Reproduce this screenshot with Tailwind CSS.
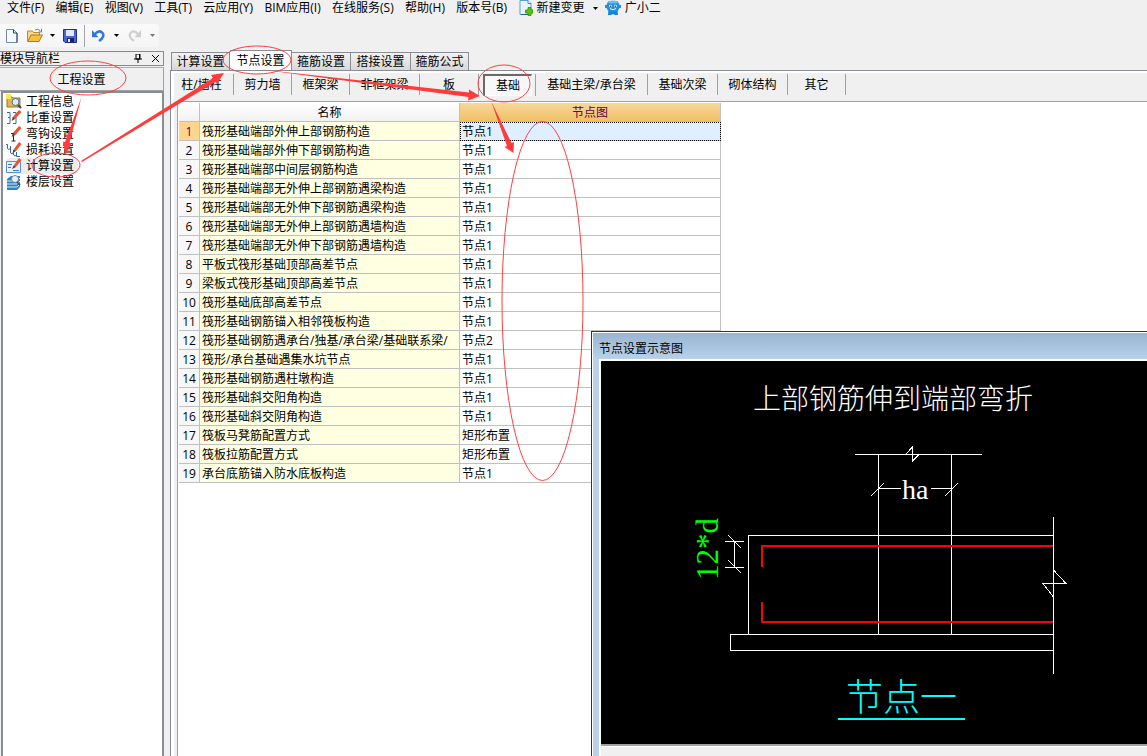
<!DOCTYPE html>
<html lang="zh-CN">
<head>
<meta charset="utf-8">
<title>工程设置 - 节点设置</title>
<script src="https://cdn.jsdelivr.net/npm/@tailwindcss/browser@4"></script>
</head>
<body class="relative flex h-screen flex-col overflow-hidden bg-[#f0f0f0] font-['Open_Sans','Noto_Sans_CJK_SC',sans-serif] text-xs leading-4 text-black">

<nav class="flex h-[18px] shrink-0 items-start justify-between pl-[7px] w-[661px] whitespace-nowrap" aria-label="菜单">
  <button>文件(F)</button>
  <button>编辑(E)</button>
  <button>视图(V)</button>
  <button>工具(T)</button>
  <button>云应用(Y)</button>
  <button>BIM应用(I)</button>
  <button>在线服务(S)</button>
  <button>帮助(H)</button>
  <button>版本号(B)</button>
  <button class="flex items-center gap-1">
    <svg class="h-4 w-[14px]" viewBox="0 0 14 16"><path d="M1 .5h8l3 3v11H1z" fill="#e8f4fd" stroke="#5a9fd0"/><path d="M9 .5v3h3" fill="#fff" stroke="#3c83bd"/><path d="M2 14.500h7" stroke="#1c5e9a"/><path d="M9 7.500h3v2.500h2v3h-2v2.500H9V13H6.500v-3H9z" fill="#5cc417" stroke="#2f8a12" stroke-width=".8"/></svg>
    新建变更
    <svg class="ml-1 h-[3px] w-[5px]" viewBox="0 0 5 3"><path d="M0 0h5L2.500 3z"/></svg>
  </button>
  <button class="-ml-1 flex items-center gap-1">
    <svg class="h-4 w-4" viewBox="0 0 16 16"><path d="M3.500 10.500h9l.5 4.500h-3l-2-1-2 1H3z" fill="#1484d6"/><path d="M3 1.500h10l1.500 3.500H16v3h-1.500L12.500 11.500h-9L1.500 8H0V5h1.500z" fill="#1c92e4"/><ellipse cx="8" cy="2" rx="5" ry="1.500" fill="#6fbdf0"/><circle cx="5.500" cy="6" r="1.300" fill="#fff"/><circle cx="10.500" cy="6" r="1.300" fill="#fff"/><circle cx="5.600" cy="6.200" r=".6"/><circle cx="10.400" cy="6.200" r=".6"/><path d="M5 8.500q3 2.500 6 0" fill="none" stroke="#fff"/></svg>
    广小二
  </button>
</nav>

<div class="mt-[6px] flex h-[23px] w-[159px] shrink-0 items-center rounded-r bg-linear-to-b from-[#fafafa] to-[#f5f5f5] pl-[6px]">
  <button aria-label="新建" class="w-[21px]"><svg class="h-[14px] w-3" viewBox="0 0 12 14"><path d="M.5.5h7l3.500 3.500v9.500H.5z" fill="#f5faff" stroke="#7189ad"/><path d="M7.500.5V4H11v9.500" fill="none" stroke="#263f66"/></svg></button>
  <button aria-label="打开" class="flex items-center gap-[7px]">
    <svg class="h-[15px] w-4" viewBox="0 0 16 15"><path d="M.5 13V3h5l1 1.500h6V7" fill="#f6d98a" stroke="#b98a2e"/><path d="M.8 13.500 4 7h11.500l-3.500 6.500z" fill="#f8bf45" stroke="#b07a1c"/><path d="M8 2q3-2 5.500 1M14.500 1v3h-3" fill="none" stroke="#5f86b4"/></svg>
    <svg class="h-[3px] w-[5px]" viewBox="0 0 5 3"><path d="M0 0h5L2.500 3z"/></svg>
  </button>
  <button aria-label="保存" class="ml-2"><svg class="h-[14px] w-[14px]" viewBox="0 0 14 14"><path d="M.5.5h13v13H2l-1.500-1.500z" fill="#4763d6" stroke="#22308c"/><path d="M3 1h8v6H3z" fill="#dfe9fb"/><path d="M4 9h7v4.500H4z" fill="#1b2460"/><path d="M5 10h2v3H5z" fill="#e8edf8"/></svg></button>
  <span class="mx-[7px] h-[22px] w-px bg-[#a5a5a5]"></span>
  <button aria-label="撤销" class="flex items-center gap-[9px]">
    <svg class="h-[13px] w-[13px]" viewBox="0 0 12 12"><path d="M2.500 5Q6 .8 9 3t0 6l-2.500 2" fill="none" stroke="#3477d8" stroke-width="2.400"/><path d="M0 1v6.500h6z" fill="#3477d8"/></svg>
    <svg class="h-[3px] w-[5px]" viewBox="0 0 5 3"><path d="M0 0h5L2.500 3z"/></svg>
  </button>
  <button aria-label="重做" class="ml-[9px] flex items-center gap-[9px]">
    <svg class="h-[13px] w-[13px]" viewBox="0 0 12 12"><path d="M9.500 5Q6 .8 3 3t0 6l2.500 2" fill="none" stroke="#cfcfcf" stroke-width="2"/><path d="M12 1v6.500H6z" fill="#cfcfcf"/></svg>
    <svg class="h-[3px] w-[5px]" viewBox="0 0 5 3"><path d="M0 0h5L2.500 3z" fill="#777"/></svg>
  </button>
</div>

<div class="flex min-h-0 flex-1">
  <aside class="mt-[4px] flex w-[164px] shrink-0 flex-col">
    <div class="flex h-[15px] items-center border border-l-0 border-[#8a8a8a] text-[12px] leading-3">
      <h2 class="flex-1 text-[12px]">模块导航栏</h2>
      <button aria-label="固定" class="mr-[10px]"><svg class="h-[9px] w-[8px]" viewBox="0 0 8 9"><path d="M2 0h4v5H2zM0 5h8M4 5v4" fill="none" stroke="#000"/><path d="M5 0h1v5H5z"/></svg></button>
      <button aria-label="关闭" class="mr-1"><svg class="h-[7px] w-[7px]" viewBox="0 0 7 7"><path d="M0 0l7 7M7 0L0 7" stroke="#000"/></svg></button>
    </div>
    <button class="mt-px h-[24px] border-y border-r border-t-[#b0b0b0] border-r-[#a0a0a0] border-b-[#a0a0a0] pt-px text-center">工程设置</button>
    <ul class="ml-px min-h-0 flex-1 border-2 border-b-0 border-[#878c96] bg-white pt-px pl-[3px] [&_button]:flex [&_button]:h-4 [&_button]:items-center [&_button]:gap-[4px] [&_button]:rounded [&_button]:pr-1 [&_svg]:size-4">
      <li><button><svg viewBox="0 0 16 16"><path d="M1 3h5l1 1h7v9H1z" fill="#e5b44b" stroke="#9c7424"/><path d="M0 0h5v5H0z" fill="#ffe45c"/><circle cx="9.500" cy="8" r="3.500" fill="#d8edff" stroke="#4e6f99"/><path d="m12 11 3 3" stroke="#444" stroke-width="2"/></svg>工程信息</button></li>
      <li><button><svg viewBox="0 0 16 16"><path d="M1 2.500h3v5H2h2v6H1M7 2.500h3v5H8h2v6H7" fill="none" stroke="#3a68a5"/><path d="m6 8 7-8 2.500 2L9 9z" fill="#e75432"/><path d="m7 7-1.500 4L9 9z" fill="#5c3a2a"/></svg>比重设置</button></li>
      <li><button><svg viewBox="0 0 16 16"><path d="M5 7.500h4M7.500 7v8M5.500 15h4" fill="none" stroke="#222"/><path d="m7 7 6-7 2.500 2L9.500 9z" fill="#e75432"/><path d="m7 7-1.500 4 4-2z" fill="#5c3a2a"/></svg>弯钩设置</button></li>
      <li><button><svg viewBox="0 0 16 16"><path d="M0 2.500h1.500v4q1.500 2 3 0V4v7q1.500 2 3 0V8v5q1.500 2 3 0V10v4.500H14" fill="none" stroke="#3a68a5"/><path d="m8 7 5-7 2.500 2L10 9z" fill="#e75432"/><path d="m8 7-1.500 4 3.500-2z" fill="#5c3a2a"/></svg>损耗设置</button></li>
      <li><button class="bg-[#ececec]"><svg viewBox="0 0 16 16"><path d="M.5 3.500h14v11H.5z" fill="#e4f0fc" stroke="#5d8fce"/><path d="M2 6.500h4M2 9.500h3M7 12.500h6" stroke="#397bcc"/><path d="m8 7 5-7 2.500 2L10 9z" fill="#e75432"/><path d="m8 7-2 4 4-2z" fill="#5c3a2a"/></svg>计算设置</button></li>
      <li><button><svg viewBox="0 0 16 16"><path d="M1 5l4-3h9v11l-3 3H1z" fill="#2d83c4"/><path d="M1 7h10l3-3M1 10h10l3-3M1 13h10l3-3" fill="none" stroke="#d8eefb"/><circle cx="9" cy="5" r="3.500" fill="#e8f3fb" stroke="#6787a5"/><path d="m11 8 3 3" stroke="#444" stroke-width="1.500"/></svg>楼层设置</button></li>
    </ul>
  </aside>

  <main class="ml-[6px] flex min-w-0 flex-1 flex-col">
    <div class="ml-px flex h-[23px] shrink-0 items-end whitespace-nowrap" role="tablist">
      <button role="tab" class="h-[18px] w-[59px] border border-b-0 border-[#898c95] bg-linear-to-b from-[#f2f2f2] to-[#d8d8d8]">计算设置</button>
      <button role="tab" aria-selected="true" class="h-[20px] w-[62px] border border-l-0 border-b-0 border-[#898c95] bg-white">节点设置</button>
      <button role="tab" class="h-[18px] w-[59px] border border-l-0 border-b-0 border-[#898c95] bg-linear-to-b from-[#f2f2f2] to-[#d8d8d8]">箍筋设置</button>
      <button role="tab" class="h-[18px] w-[60px] border border-l-0 border-b-0 border-[#898c95] bg-linear-to-b from-[#f2f2f2] to-[#d8d8d8]">搭接设置</button>
      <button role="tab" class="h-[18px] w-[58px] border border-l-0 border-b-0 border-[#898c95] bg-linear-to-b from-[#f2f2f2] to-[#d8d8d8]">箍筋公式</button>
    </div>
    <section class="flex min-h-0 flex-1 flex-col border-t border-l border-[#898c95] bg-white pt-[2px] pl-[3px]">
      <div class="flex h-[28px] shrink-0 items-start bg-[#f0f0f0] pt-px whitespace-nowrap [&>button]:h-[21px] [&>button]:border-r [&>button]:border-[#a0a0a0]">
        <button class="w-[60px] pr-1">柱/墙柱</button>
        <button class="w-[58px]">剪力墙</button>
        <button class="w-[58px]">框架梁</button>
        <button class="w-[70px]">非框架梁</button>
        <button class="w-[59px]">板</button>
        <div class="flex h-[22px] w-[57px] border-r border-[#a0a0a0] pl-[4px]"><button aria-pressed="true" class="h-[22px] w-[49px] border-t-2 border-l-2 border-r border-b border-t-[#696969] border-r-white border-b-white border-l-[#696969] bg-[#f8f8f8]">基础</button></div>
        <button class="w-[112px]">基础主梁/承台梁</button>
        <button class="w-[70px]">基础次梁</button>
        <button class="w-[70px]">砌体结构</button>
        <button class="w-[58px]">其它</button>
      </div>
      <div class="flex min-h-0 flex-1 bg-[#f0f0f0] pl-[3px]">
        <div class="min-w-0 flex-1 border-t border-l border-[#a0a0a0] bg-white pt-px pl-px">
          <table class="w-[542px] table-fixed border-separate border-spacing-0 text-left [&_td]:h-[19px] [&_td]:border-r [&_td]:border-b [&_td]:border-[#c0c0c0] [&_td]:p-0 [&_td]:pt-px [&_td]:pl-[2px] [&_td]:leading-4 [&_td]:whitespace-nowrap [&_th]:h-[19px] [&_th]:border-r [&_th]:border-b [&_th]:border-[#c0c0c0] [&_th]:p-0 [&_th]:pt-px [&_th]:text-center [&_th]:leading-4 [&_th]:font-normal">
            <colgroup><col class="w-[21px]"><col class="w-[260px]"><col class="w-[261px]"></colgroup>
            <thead>
              <tr class="bg-linear-to-b from-white to-[#f0f0f0]"><th aria-label="序号"></th><th>名称</th><th class="bg-linear-to-b from-[#f8d79b] to-[#f0c062] text-[#5b004f]">节点图</th></tr>
            </thead>
            <tbody class="[&_td:nth-child(2)]:bg-[#ffffe1] [&_th]:bg-[#f7f7f7]">
              <tr><th class="!bg-[#ffd58d] text-[#5b004f]">1</th><td>筏形基础端部外伸上部钢筋构造</td><td class="bg-[#dfefff] outline-1 -outline-offset-1 outline-dotted outline-black">节点1</td></tr>
              <tr><th>2</th><td>筏形基础端部外伸下部钢筋构造</td><td>节点1</td></tr>
              <tr><th>3</th><td>筏形基础端部中间层钢筋构造</td><td>节点1</td></tr>
              <tr><th>4</th><td>筏形基础端部无外伸上部钢筋遇梁构造</td><td>节点1</td></tr>
              <tr><th>5</th><td>筏形基础端部无外伸下部钢筋遇梁构造</td><td>节点1</td></tr>
              <tr><th>6</th><td>筏形基础端部无外伸上部钢筋遇墙构造</td><td>节点1</td></tr>
              <tr><th>7</th><td>筏形基础端部无外伸下部钢筋遇墙构造</td><td>节点1</td></tr>
              <tr><th>8</th><td>平板式筏形基础顶部高差节点</td><td>节点1</td></tr>
              <tr><th>9</th><td>梁板式筏形基础顶部高差节点</td><td>节点1</td></tr>
              <tr><th>10</th><td>筏形基础底部高差节点</td><td>节点1</td></tr>
              <tr><th>11</th><td>筏形基础钢筋锚入相邻筏板构造</td><td>节点1</td></tr>
              <tr><th>12</th><td>筏形基础钢筋遇承台/独基/承台梁/基础联系梁/</td><td>节点2</td></tr>
              <tr><th>13</th><td>筏形/承台基础遇集水坑节点</td><td>节点1</td></tr>
              <tr><th>14</th><td>筏形基础钢筋遇柱墩构造</td><td>节点1</td></tr>
              <tr><th>15</th><td>筏形基础斜交阳角构造</td><td>节点1</td></tr>
              <tr><th>16</th><td>筏形基础斜交阴角构造</td><td>节点1</td></tr>
              <tr><th>17</th><td>筏板马凳筋配置方式</td><td>矩形布置</td></tr>
              <tr><th>18</th><td>筏板拉筋配置方式</td><td>矩形布置</td></tr>
              <tr><th>19</th><td>承台底筋锚入防水底板构造</td><td>节点1</td></tr>
            </tbody>
          </table>
        </div>
      </div>
    </section>
  </main>
</div>

<!-- Floating window with the node diagram -->
<div role="dialog" aria-labelledby="dlg" class="absolute top-[331px] right-0 bottom-0 left-[591px] flex flex-col border-t border-l border-[#333] bg-white pt-px pl-px">
  <div class="flex min-h-0 flex-1 flex-col bg-[#b9d1ea] pl-[6px]">
    <h2 id="dlg" class="-ml-[6px] h-[26px] shrink-0 bg-linear-to-b from-[#98b4d0] to-[#b9d1ea] pt-[8px] pl-[6px] leading-4">节点设置示意图</h2>
    <div class="flex min-h-0 flex-1 flex-col border-t-2 border-l-2 border-white bg-[#f0f0f0]">
      <div class="min-h-0 flex-1 overflow-hidden bg-black">
        <svg class="block h-[383px] w-[546px]" viewBox="601 361 546 383" fill="none" stroke="#fff" shape-rendering="crispEdges">
          <g stroke="none" fill="#fff">
            <text x="753" y="409" class="font-['Noto_Sans_CJK_SC',sans-serif] text-[28px] font-light">上部钢筋伸到端部弯折</text>
            <text x="902" y="499" class="font-['Liberation_Serif',serif] text-[28px]">ha</text>
            <text transform="translate(718 580) rotate(-90)" fill="#0f0" class="font-['Liberation_Serif',serif] text-[31px]">12*d</text>
            <text x="846" y="711" fill="#0ff" class="font-['Noto_Sans_CJK_SC',sans-serif] text-[37px] font-light">节点一</text>
          </g>
          <path d="M855 454.500h127M878.500 454v180M951.500 454v180M879 488.500h22M931 488.500h20M871 496l13-13M945 496l13-13M906 454l6-6.500v14l7-7"/>
          <path d="M1053.500 535.500h-305v99M1053.500 634.500h-323v16h323M1053.500 517v157M1053.500 570l12 13h-23l11 14"/>
          <path d="M725 541.500h19M725 567.500h19M734.500 541v27M728 535l13 13M728 560l13 13"/>
          <path d="M1053 546H762v21M1053 622H762v-20" stroke="#f00" stroke-width="2"/>
          <path d="M838 719h127" stroke="#0ff" stroke-width="2"/>
        </svg>
      </div>
      <div class="h-[12px] shrink-0 border-t-2 border-[#a0a0a0]"><div class="h-px bg-white"></div></div>
    </div>
  </div>
</div>

<!-- Hand-drawn guide marks over the window -->
<svg class="pointer-events-none absolute top-0 left-0 h-[756px] w-[1147px]" viewBox="0 0 1147 756" fill="none" stroke="#ff4040" aria-hidden="true">
  <ellipse cx="88" cy="78" rx="38" ry="17"/>
  <ellipse cx="56" cy="165" rx="24" ry="12"/>
  <ellipse cx="257" cy="60" rx="34" ry="14"/>
  <ellipse cx="504" cy="83.500" rx="26" ry="18.500"/>
  <ellipse cx="542.500" cy="301" rx="40.500" ry="179.500"/>
  <g fill="#ff3b3b" stroke="none">
    <path d="M81.500 97 65 142l-2-.5 2.500 12.500 6-10.500-2-.5z"/>
    <path d="M81 161 213 78l-2-3 13-2-7 11-1.500-2L82 162z"/>
    <path d="M257 69 469 92.500v-3l11 6.500-12 4.500.5-3.500z"/>
    <path d="M491 101 507 146l-2.500 1 9 6 .5-11-2.500 1z"/>
  </g>
</svg>
</body>
</html>
